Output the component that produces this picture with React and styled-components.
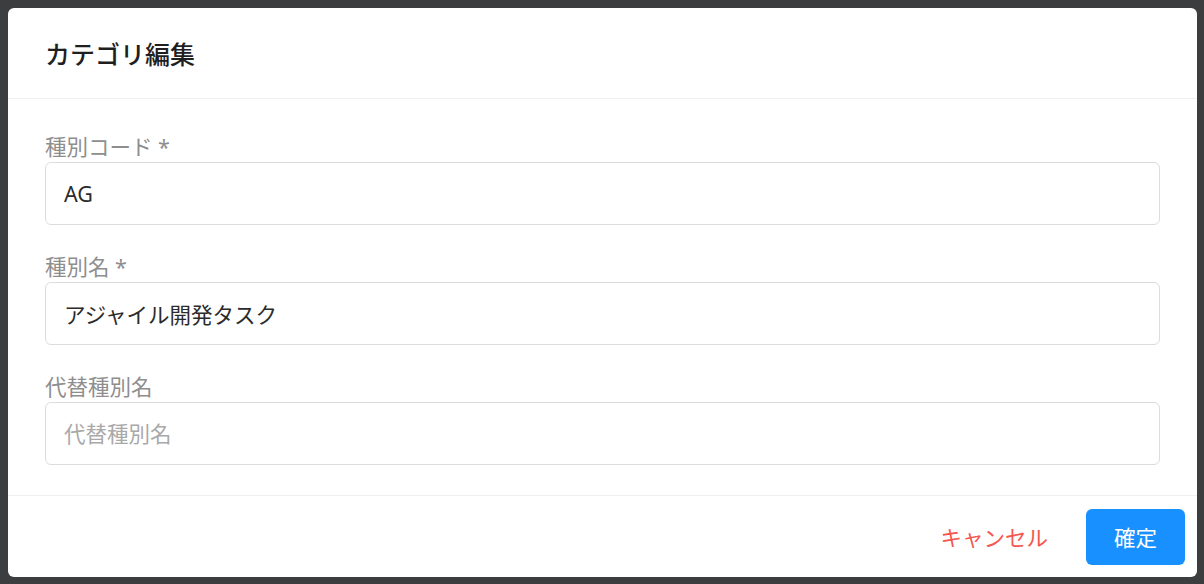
import React from "react";
import styled, { createGlobalStyle } from "styled-components";

const GlobalStyle = createGlobalStyle`
  html, body {
    margin: 0;
    padding: 0;
    background: #3b3d3f;
    font-family: "Noto Sans", "Noto Sans CJK JP", sans-serif;
  }
`;

const Backdrop = styled.div`
  width: 1204px;
  height: 584px;
  box-sizing: border-box;
  padding: 8px 7px 7px 8px;
  background: #3b3d3f;
`;

const Modal = styled.div`
  display: flex;
  flex-direction: column;
  height: 569px;
  background: #fff;
  border-radius: 6px;
  overflow: hidden;
`;

const Header = styled.div`
  height: 90px;
  flex: none;
  display: flex;
  align-items: center;
  padding: 0 37px;
  border-bottom: 1px solid #efefef;
`;

const Title = styled.h2`
  margin: 0;
  font-size: 25px;
  font-weight: 500;
  color: #1f1f1f;
`;

const Body = styled.div`
  flex: 1;
  display: flex;
  flex-direction: column;
  gap: 28px;
  padding: 34px 37px 0 37px;
  border-bottom: 1px solid #efefef;
`;

const Field = styled.div`
  display: flex;
  flex-direction: column;
  gap: 1px;
`;

const Label = styled.label`
  font-size: 21.5px;
  line-height: 28px;
  color: #8e8e8e;
`;

const Input = styled.input`
  height: 63px;
  box-sizing: border-box;
  border: 1px solid #dcdcdc;
  border-radius: 6px;
  padding: 0 18px;
  font-family: inherit;
  font-size: 21.5px;
  color: #2b2b2b;
  outline: none;
  &::placeholder {
    color: #a9a9a9;
  }
`;

const Footer = styled.div`
  height: 81px;
  flex: none;
  display: flex;
  align-items: center;
  justify-content: flex-end;
  gap: 22px;
  padding: 0 12px 0 0;
`;

const Button = styled.button`
  height: 56px;
  border: none;
  border-radius: 6px;
  font-family: inherit;
  font-size: 21.5px;
  cursor: pointer;
  padding: 0 ${(p) => (p.$primary ? "28px" : "16px")};
  min-width: ${(p) => (p.$primary ? "99px" : "auto")};
  background: ${(p) => (p.$primary ? "#1890ff" : "transparent")};
  color: ${(p) => (p.$primary ? "#fff" : "#f5564e")};
`;

export default function App() {
  return (
    <>
      <GlobalStyle />
      <Backdrop>
        <Modal>
          <Header>
            <Title>カテゴリ編集</Title>
          </Header>
          <Body>
            <Field>
              <Label>種別コード *</Label>
              <Input defaultValue="AG" />
            </Field>
            <Field>
              <Label>種別名 *</Label>
              <Input defaultValue="アジャイル開発タスク" />
            </Field>
            <Field>
              <Label>代替種別名</Label>
              <Input placeholder="代替種別名" />
            </Field>
          </Body>
          <Footer>
            <Button>キャンセル</Button>
            <Button $primary>確定</Button>
          </Footer>
        </Modal>
      </Backdrop>
    </>
  );
}
